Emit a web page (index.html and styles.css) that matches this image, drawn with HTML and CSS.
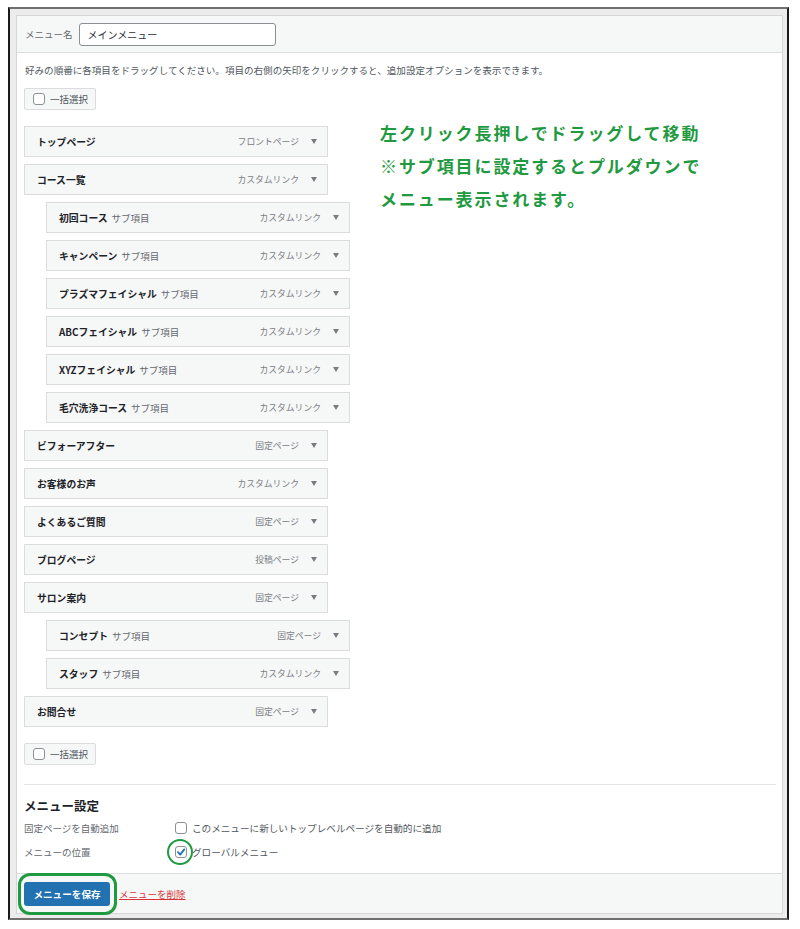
FILE: index.html
```html
<!DOCTYPE html>
<html lang="ja">
<head>
<meta charset="utf-8">
<title>メニュー編集</title>
<link rel="stylesheet" href="styles.css">
</head>
<body>
<div class="shot">
  <div class="menu-box">
    <div class="menu-head">
      <span class="name-label">メニュー名</span>
      <div class="name-input">メインメニュー</div>
    </div>
    <div class="menu-body">
      <p class="desc">好みの順番に各項目をドラッグしてください。項目の右側の矢印をクリックすると、追加設定オプションを表示できます。</p>
      <div class="bulk"><span class="cb"></span>一括選択</div>
      <div class="edit-row">
        <ul class="items">
          <li class="item"><span class="title">トップページ</span><span class="controls"><span class="type">フロントページ</span><span class="arrow"></span></span></li>
          <li class="item"><span class="title">コース一覧</span><span class="controls"><span class="type">カスタムリンク</span><span class="arrow"></span></span></li>
          <li class="item sub"><span class="title">初回コース<span class="subtag">サブ項目</span></span><span class="controls"><span class="type">カスタムリンク</span><span class="arrow"></span></span></li>
          <li class="item sub"><span class="title">キャンペーン<span class="subtag">サブ項目</span></span><span class="controls"><span class="type">カスタムリンク</span><span class="arrow"></span></span></li>
          <li class="item sub"><span class="title">プラズマフェイシャル<span class="subtag">サブ項目</span></span><span class="controls"><span class="type">カスタムリンク</span><span class="arrow"></span></span></li>
          <li class="item sub"><span class="title">ABCフェイシャル<span class="subtag">サブ項目</span></span><span class="controls"><span class="type">カスタムリンク</span><span class="arrow"></span></span></li>
          <li class="item sub"><span class="title">XYZフェイシャル<span class="subtag">サブ項目</span></span><span class="controls"><span class="type">カスタムリンク</span><span class="arrow"></span></span></li>
          <li class="item sub"><span class="title">毛穴洗浄コース<span class="subtag">サブ項目</span></span><span class="controls"><span class="type">カスタムリンク</span><span class="arrow"></span></span></li>
          <li class="item"><span class="title">ビフォーアフター</span><span class="controls"><span class="type">固定ページ</span><span class="arrow"></span></span></li>
          <li class="item"><span class="title">お客様のお声</span><span class="controls"><span class="type">カスタムリンク</span><span class="arrow"></span></span></li>
          <li class="item"><span class="title">よくあるご質問</span><span class="controls"><span class="type">固定ページ</span><span class="arrow"></span></span></li>
          <li class="item"><span class="title">ブログページ</span><span class="controls"><span class="type">投稿ページ</span><span class="arrow"></span></span></li>
          <li class="item"><span class="title">サロン案内</span><span class="controls"><span class="type">固定ページ</span><span class="arrow"></span></span></li>
          <li class="item sub"><span class="title">コンセプト<span class="subtag">サブ項目</span></span><span class="controls"><span class="type">固定ページ</span><span class="arrow"></span></span></li>
          <li class="item sub"><span class="title">スタッフ<span class="subtag">サブ項目</span></span><span class="controls"><span class="type">カスタムリンク</span><span class="arrow"></span></span></li>
          <li class="item"><span class="title">お問合せ</span><span class="controls"><span class="type">固定ページ</span><span class="arrow"></span></span></li>
        </ul>
        <div class="note">左クリック長押しでドラッグして移動<br>※サブ項目に設定するとプルダウンで<br>メニュー表示されます。</div>
      </div>
      <div class="bulk bulk-bottom"><span class="cb"></span>一括選択</div>
      <div class="settings">
        <h3 class="settings-title">メニュー設定</h3>
        <div class="set-row">
          <span class="set-label">固定ページを自動追加</span>
          <span class="set-value"><span class="cb"></span>このメニューに新しいトップレベルページを自動的に追加</span>
        </div>
        <div class="set-row">
          <span class="set-label">メニューの位置</span>
          <span class="set-value"><span class="cb checked"><svg class="check" viewBox="0 0 12 12" width="12" height="12"><path d="M3 6.2 L5.2 8.6 L9.3 3.4" fill="none" stroke="#2271b1" stroke-width="1.8" stroke-linecap="round" stroke-linejoin="round"/></svg><span class="ring"></span></span>グローバルメニュー</span>
        </div>
      </div>
    </div>
    <div class="menu-foot">
      <span class="save-btn">メニューを保存<span class="ring-rect"></span></span>
      <a class="delete-link" href="#">メニューを削除</a>
    </div>
  </div>
</div>
</body>
</html>
```

FILE: styles.css
```css
* { box-sizing: border-box; }

html, body {
  margin: 0;
  padding: 0;
  background: #ffffff;
}

body {
  font-family: "Noto Sans CJK JP", "Noto Sans", sans-serif;
  color: #1d2327;
}

.shot {
  display: flex;
  flex-direction: column;
  width: 781px;
  height: 913px;
  margin: 7px 0 0 8px;
  padding: 6px 4px 4px 6px;
  background: #ececec;
  border-top: 2px solid #6f6f6f;
  border-bottom: 2px solid #6f6f6f;
  border-left: 2px solid #1a1a1a;
  border-right: 2px solid #1a1a1a;
}

.menu-box {
  flex: 1;
  display: flex;
  flex-direction: column;
  background: #ffffff;
  border: 1px solid #d6d6d8;
}

/* header */
.menu-head {
  height: 37px;
  display: flex;
  align-items: center;
  padding-left: 8px;
  background: #f6f7f7;
  border-bottom: 1px solid #dcdcde;
  flex-shrink: 0;
}

.name-label {
  font-size: 9.5px;
  color: #646970;
  margin-right: 6px;
  line-height: 14px;
}

.name-input {
  width: 197px;
  height: 23px;
  border: 1px solid #8c8f94;
  border-radius: 3px;
  background: #fff;
  font-size: 10px;
  line-height: 21px;
  padding-left: 8px;
  color: #2c3338;
}

/* body */
.menu-body {
  flex: 1;
  padding: 10px 7px 0 7px;
  display: flex;
  flex-direction: column;
}

.desc {
  margin: 0;
  font-size: 9.55px;
  line-height: 14px;
  color: #50575e;
  padding-left: 1px;
}

.bulk {
  display: flex;
  align-items: center;
  width: 72px;
  height: 22px;
  margin-top: 11px;
  padding-left: 8px;
  background: #f6f7f7;
  border: 1px solid #dcdcde;
  border-radius: 2px;
  font-size: 9.5px;
  color: #50575e;
}

.bulk .cb { margin-right: 5px; }

.bulk-bottom { margin-top: 16px; }

.cb {
  position: relative;
  display: inline-block;
  width: 12px;
  height: 12px;
  border: 1px solid #8c8f94;
  border-radius: 3px;
  background: #fff;
  flex-shrink: 0;
}

.check {
  position: absolute;
  left: -1px;
  top: -1px;
}

.edit-row {
  display: flex;
  align-items: flex-start;
  margin-top: 16px;
}

.items {
  list-style: none;
  margin: 0;
  padding: 0;
  width: 327px;
  display: flex;
  flex-direction: column;
  gap: 7px;
}

.item {
  width: 304px;
  height: 31px;
  display: flex;
  align-items: center;
  justify-content: space-between;
  padding: 0 10px 0 12px;
  background: #f6f7f7;
  border: 1px solid #dcdcde;
}

.item.sub { margin-left: 22px; }

.title {
  font-size: 9.8px;
  font-weight: 700;
  color: #1d2327;
  white-space: nowrap;
}

.subtag {
  font-weight: 400;
  color: #646970;
  margin-left: 4px;
  font-size: 9.5px;
}

.controls {
  display: flex;
  align-items: center;
}

.type {
  font-size: 8.8px;
  color: #7a7e84;
  margin-right: 12px;
}

.arrow {
  width: 0;
  height: 0;
  border-left: 3px solid transparent;
  border-right: 3px solid transparent;
  border-top: 5px solid #787c82;
}

.note {
  margin-top: -10px;
  margin-left: 29px;
  font-size: 17px;
  line-height: 33px;
  font-weight: 700;
  letter-spacing: 1.9px;
  color: #1f9a40;
  white-space: nowrap;
}

/* settings */
.settings {
  margin-top: 19px;
  border-top: 1px solid #e4e4e6;
  margin-right: -1px;
}

.settings-title {
  margin: 12px 0 0 0;
  font-size: 12.5px;
  line-height: 18px;
  font-weight: 700;
  color: #1d2327;
}

.set-row {
  display: flex;
  align-items: center;
  height: 24px;
}

.set-row:first-of-type { margin-top: 1px; }

.set-label {
  width: 151px;
  font-size: 9.5px;
  color: #646970;
}

.set-value {
  display: flex;
  align-items: center;
  font-size: 9.6px;
  color: #50575e;
}

.set-value .cb { margin-right: 5px; }

.ring {
  position: absolute;
  left: -9px;
  top: -8px;
  width: 26px;
  height: 26px;
  border: 2px solid #1f9a40;
  border-radius: 50%;
}

/* footer */
.menu-foot {
  height: 40px;
  flex-shrink: 0;
  display: flex;
  align-items: center;
  padding: 0 7px;
  background: #f6f7f7;
  border-top: 1px solid #dcdcde;
}

.save-btn {
  position: relative;
  display: inline-flex;
  align-items: center;
  justify-content: center;
  width: 86px;
  height: 24px;
  background: #2271b1;
  border-radius: 3px;
  color: #fff;
  font-size: 9.6px;
  font-weight: 700;
}

.ring-rect {
  position: absolute;
  left: -6px;
  top: -9px;
  width: 99px;
  height: 42px;
  border: 3px solid #1f9a40;
  border-radius: 12px;
}

.delete-link {
  margin-left: 9px;
  font-size: 9.5px;
  color: #d63638;
  text-decoration: underline;
}
```
